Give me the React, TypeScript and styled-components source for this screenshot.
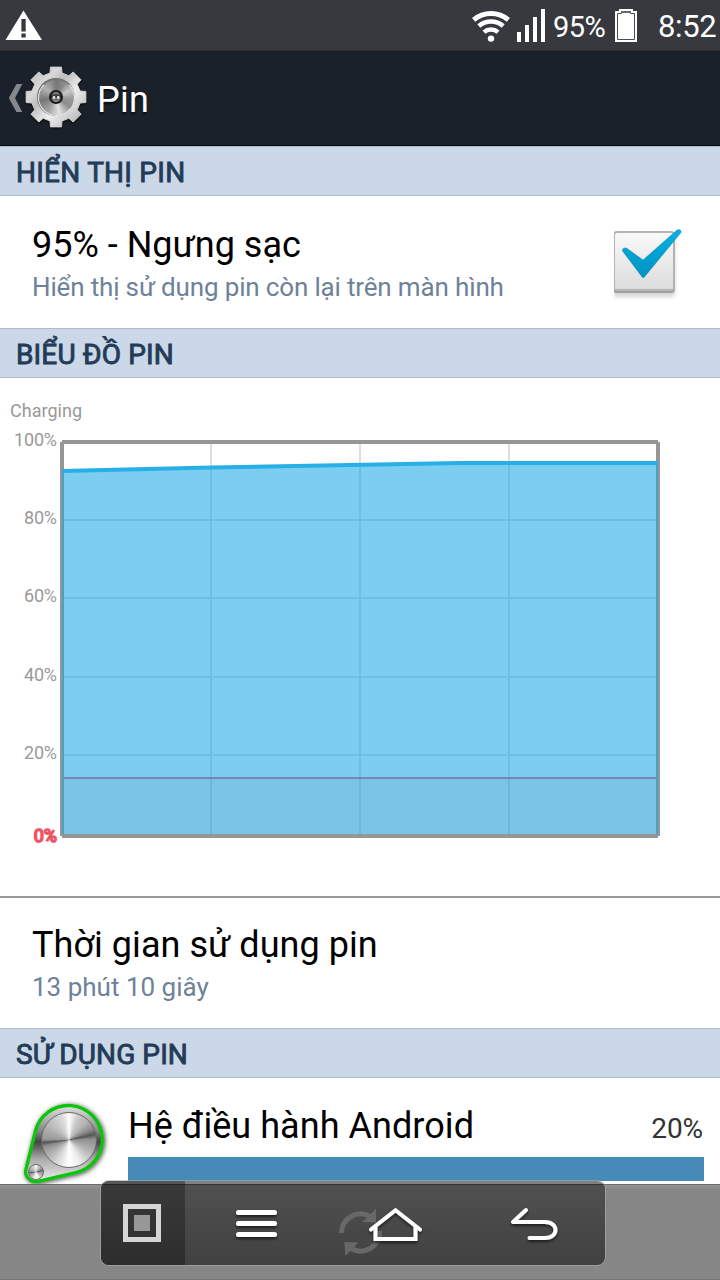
import React from "react";
import styled, { createGlobalStyle } from "styled-components";

const GlobalStyle = createGlobalStyle`
  * { box-sizing: border-box; }
  body { margin: 0; background: #fff; }
  svg { display: block; }
`;

const Screen = styled.div`
  width: 720px;
  height: 1280px;
  display: flex;
  flex-direction: column;
  overflow: hidden;
  background: #fff;
  font-family: Roboto, "Noto Sans", sans-serif;
  color: #000;
  white-space: nowrap;
`;

const StatusBar = styled.div`
  flex: none;
  height: 51px;
  display: flex;
  align-items: center;
  justify-content: space-between;
  background: #37393f;
  border-bottom: 1px solid #2b2e34;
  color: #fff;
`;

const StatusGroup = styled.div`
  display: flex;
  align-items: center;
  height: 50px;
`;

const StatusText = styled.span<{ $size: number; $width: number; $gap: number; $track: number }>`
  width: ${(p) => p.$width}px;
  margin-left: ${(p) => p.$gap}px;
  padding-top: 3px;
  font-size: ${(p) => p.$size}px;
  letter-spacing: ${(p) => p.$track}px;
  line-height: 50px;
`;

const ActionBar = styled.header`
  flex: none;
  height: 95px;
  display: flex;
  align-items: center;
  padding-left: 8px;
  background: #1b212a;
  border-bottom: 1px solid #05070a;
  color: #fff;
`;

const ActionTitle = styled.h1`
  margin: 4px 0 0 9px;
  font-size: 36px;
  font-weight: 400;
  line-height: 42px;
  letter-spacing: 0.3px;
  text-shadow: 0 2px 2px rgba(0, 0, 0, 0.6);
`;

const GearBox = styled.div`
  position: relative;
  width: 64px;
  height: 64px;
  margin: -2px 0 0 1px;
  filter: drop-shadow(0 1px 1px rgba(0, 0, 0, 0.8));
`;

const GearDisc = styled.div`
  position: absolute;
  left: 14px;
  top: 14px;
  width: 37px;
  height: 37px;
  border-radius: 50%;
  border: 1.5px solid #efefef;
  border-top-color: #777;
  background: conic-gradient(#777 0deg, #8b8b8b 30deg, #c8c8c8 62deg, #999 95deg, #8c8c8c 125deg, #e2e2e2 170deg, #a5a5a5 210deg, #777 260deg, #b2b2b2 310deg, #777 360deg);
`;

const GearHub = styled.div`
  position: absolute;
  left: 10px;
  top: 10px;
  width: 14px;
  height: 14px;
  border-radius: 50%;
  border: 2px solid #191919;
  background: radial-gradient(circle at 30% 55%, #ddd 0 12%, transparent 22%), radial-gradient(circle at 72% 55%, #ddd 0 12%, transparent 22%), linear-gradient(#999, #222 45%, #aaa);
`;

const Content = styled.main`
  flex: none;
  height: 1038px;
  overflow: hidden;
`;

const SectionHeader = styled.h2<{ $track: number }>`
  height: 50px;
  margin: 0;
  padding: 3px 0 0 16px;
  background: #cbd8e8;
  border-top: 1px solid #adbdcb;
  border-bottom: 1px solid #adbdcb;
  color: #243b57;
  font-size: 28px;
  font-weight: 400;
  -webkit-text-stroke: 0.9px #243b57;
  line-height: 46px;
  letter-spacing: ${(p) => p.$track}px;
`;

const Row = styled.div<{ $height: number; $pad: number }>`
  height: ${(p) => p.$height}px;
  display: flex;
  align-items: flex-start;
  justify-content: space-between;
  padding: ${(p) => p.$pad}px 32px 0 32px;
`;

const RowTitle = styled.div<{ $track?: number }>`
  font-size: 36px;
  line-height: 42px;
  letter-spacing: ${(p) => p.$track ?? 0}px;
`;

const RowSummary = styled.div<{ $track?: number }>`
  margin-top: 5px;
  color: #6d8299;
  font-size: 26px;
  line-height: 32px;
  letter-spacing: ${(p) => p.$track ?? 0}px;
`;

const CheckSlot = styled.div`
  margin-right: -4px;
`;

const ChartPanel = styled.div`
  height: 520px;
  border-bottom: 2px solid #999;
`;

const AppRow = styled.div`
  display: flex;
  padding: 22px 16px 0 20px;
`;

const AppIconBox = styled.div`
  position: relative;
  width: 90px;
  height: 90px;
`;

const Knob = styled.div<{ $x: number; $y: number; $size: number }>`
  position: absolute;
  left: ${(p) => p.$x}px;
  top: ${(p) => p.$y}px;
  width: ${(p) => p.$size}px;
  height: ${(p) => p.$size}px;
  border-radius: 50%;
  border: 1.5px solid #6b6b6b;
  background: conic-gradient(#fff 0deg, #ccc 20deg, #b2b2b2 45deg, #8a8a8a 65deg, #555 78deg, #909090 88deg, #b5b5b5 120deg, #eee 155deg, #fff 180deg, #ddd 205deg, #a8a8a8 240deg, #8d8d8d 256deg, #555 264deg, #999 272deg, #bbb 310deg, #ddd 345deg, #fff 360deg);
`;

const AppInfo = styled.div`
  flex: 1;
  margin-left: 18px;
`;

const AppLine = styled.div`
  display: flex;
  justify-content: space-between;
  align-items: baseline;
  height: 57px;
  padding-top: 5px;
`;

const Percent = styled.span`
  margin-right: 1px;
  color: #333;
  font-size: 28px;
  letter-spacing: -0.1px;
`;

const UsageBar = styled.div`
  height: 24px;
  background: #468ab8;
`;

const NavBar = styled.nav`
  flex: none;
  height: 96px;
  display: flex;
  align-items: flex-start;
  padding-left: 101px;
  background: linear-gradient(#929292, #868686 5px);
  border-top: 1px solid #6c6c6c;
  border-bottom: 1px solid #757575;
`;

const NavPanel = styled.div`
  width: 504px;
  height: 84px;
  margin-top: -4px;
  display: flex;
  border-radius: 8px;
  overflow: hidden;
  background: linear-gradient(#808080 0 3px, #343434 3px 4px, #505050 4px, #414141 100%);
  box-shadow: 0 0 0 1px rgba(170, 170, 170, 0.65);
`;

const NavButton = styled.div<{ $width: number; $active?: boolean }>`
  width: ${(p) => p.$width}px;
  height: 84px;
  background: ${(p) => (p.$active ? "linear-gradient(#575757 0 3px, #252525 3px 4px, #393939 4px, #2d2d2d 100%)" : "transparent")};
`;

const gearPath = (() => {
  const pts: string[] = [];
  const steps: [number, number][] = [[-14, 24.8], [-10.5, 30.4], [10.5, 30.4], [14, 24.8]];
  for (let i = 0; i < 8; i++) {
    for (const [a, r] of steps) {
      const t = ((i * 45 + a) * Math.PI) / 180;
      pts.push(`${(32 + r * Math.sin(t)).toFixed(2)},${(32 - r * Math.cos(t)).toFixed(2)}`);
    }
  }
  return `M${pts.join("L")}Z`;
})();

const arc = (r: number) => {
  const t = (40 * Math.PI) / 180;
  const dx = r * Math.sin(t);
  const y = 40.5 - r * Math.cos(t);
  return `M${20 - dx} ${y}A${r} ${r} 0 0 1 ${20 + dx} ${y}`;
};

const WarningIcon = () => (
  <svg width="50" height="50">
    <path d="M23.5 10.5 42 40H5.5Z" fill="#fff" />
    <path d="M21.4 19h4.3v12.500h-4.3zM21.4 33.500h4.3v4h-4.3z" fill="#37393f" />
  </svg>
);

const SignalIcons = () => (
  <svg width="80" height="50">
    <g fill="none" stroke="#fff">
      <path d={arc(27)} strokeWidth="5" />
      <path d={arc(19)} strokeWidth="4.6" />
      <path d={arc(11)} strokeWidth="4.4" />
    </g>
    <circle cx="20" cy="38.6" r="3.2" fill="#fff" />
    <path d="M46 32h4v10h-4zM54 25h4v17h-4zM62 17h4v25h-4zM70 9h4v33h-4z" fill="#fff" />
  </svg>
);

const BatteryIcon = () => (
  <svg width="24" height="50">
    <path d="M5 9h14v2h4v31H1V11h4z" fill="#fff" />
    <path d="M3.500 39.500V13.500H7.500V11.500H16.500V13.500H20.500V39.500Z" fill="none" stroke="#4a4c51" />
    <path d="M7 11h10v2H7z" fill="#66686c" />
  </svg>
);

const Chevron = () => (
  <svg width="15" height="30">
    <path d="M8.500 1h5.800L7 15l7.200 14H8.400L.8 15z" fill="#84878b" />
  </svg>
);

const SettingsGear = () => (
  <GearBox>
    <svg width="64" height="64">
      <defs>
        <linearGradient id="gear" x1="0" y1="0" x2="1" y2="1">
          <stop offset="0" stopColor="#b5b5b5" />
          <stop offset=".28" stopColor="#d9d9d9" />
          <stop offset=".4" stopColor="#bdbdbd" />
          <stop offset=".6" stopColor="#eee" />
          <stop offset="1" stopColor="#a5a5a5" />
        </linearGradient>
      </defs>
      <path d={gearPath} fill="url(#gear)" stroke="#cfcfcf" strokeWidth="1" strokeLinejoin="round" />
      <circle cx="32" cy="32" r="19" fill="#707070" />
    </svg>
    <GearDisc>
      <GearHub />
    </GearDisc>
  </GearBox>
);

const Checkbox = () => (
  <svg width="78" height="78">
    <defs>
      <linearGradient id="box" x1="0" y1="0" x2="0" y2="1">
        <stop offset="0" stopColor="#fafafa" />
        <stop offset="1" stopColor="#dadada" />
      </linearGradient>
      <linearGradient id="tick" x1="0" y1="0" x2="0" y2="1">
        <stop offset="0" stopColor="#06b2e0" />
        <stop offset="1" stopColor="#0092c3" />
      </linearGradient>
      <filter id="soft" x="-20%" y="-20%" width="140%" height="150%">
        <feDropShadow dx="0" dy="4" stdDeviation="2" floodOpacity=".16" />
      </filter>
    </defs>
    <g transform="translate(-4 0)">
      <rect x="4" y="8" width="60" height="60" rx="3" fill="url(#box)" stroke="#b3b3b3" strokeWidth="2" filter="url(#soft)" />
      <path d="M4 65.500Q4 68 7 68H61Q64 68 64 65.500" fill="none" stroke="#a0a0a0" strokeWidth="2" />
      <path d="M5 66H63" stroke="#b5b5b5" strokeWidth="2" />
      <path d="M12.500 27Q12 23.500 16.500 24L33 36L67 6Q71.500 4.500 71 8.500L34 53.500H32.500Z" fill="url(#tick)" stroke="#007fa8" strokeWidth=".4" />
    </g>
  </svg>
);

const axisLabels = [
  { text: "100%", y: 68, width: 43 },
  { text: "80%", y: 146, width: 33 },
  { text: "60%", y: 224, width: 33 },
  { text: "40%", y: 303, width: 33 },
  { text: "20%", y: 381, width: 33 },
];

const BatteryChart = () => (
  <svg width="720" height="518" fontFamily="Roboto, sans-serif" fontSize="18">
    <text x="10" y="39" fill="#999" textLength="72">Charging</text>
    {axisLabels.map((l) => (
      <text key={l.text} x="57" y={l.y} fill="#999" textAnchor="end" textLength={l.width}>{l.text}</text>
    ))}
    <text x="57" y="464" fill="#f05565" stroke="#f05565" strokeWidth="1.7" textAnchor="end">0%</text>
    <path d="M211 66V456M360 66V456M509 66V456M64 142H656M64 220H656M64 299H656M64 377H656" stroke="#dedede" strokeWidth="2" />
    <path d="M62 64V458M658 64V458M62 64H658" stroke="#969696" strokeWidth="4" />
    <path d="M62 93L211 89.500L460 85H658V456H62Z" fill="#16a8e4" fillOpacity=".56" />
    <path d="M64 401H656V456H64Z" fill="#7870a0" fillOpacity=".11" />
    <path d="M64 400H656" stroke="#7585b5" strokeWidth="2" />
    <path d="M62 93L211 89.500L460 85H658" fill="none" stroke="#28afe5" strokeWidth="4" />
    <path d="M62 458H658" stroke="#969696" strokeWidth="4" />
  </svg>
);

const AndroidIcon = () => (
  <AppIconBox>
    <svg width="90" height="90" overflow="visible">
      <defs>
        <filter id="dark" x="-20%" y="-20%" width="140%" height="140%">
          <feDropShadow dx="1" dy="1" stdDeviation="2.5" floodOpacity=".75" />
        </filter>
        <linearGradient id="body" x1="0" y1="0" x2="0" y2="1">
          <stop offset="0" stopColor="#e2e2e2" />
          <stop offset=".33" stopColor="#888" />
          <stop offset=".48" stopColor="#444" />
          <stop offset=".7" stopColor="#aaa" />
          <stop offset="1" stopColor="#eee" />
        </linearGradient>
      </defs>
      <path d="M15.300 31.400A34 34 0 1 1 55.800 72.700L17.900 81.300A10 10 0 0 1 6 69.100Z" fill="url(#body)" stroke="#0cc40c" strokeWidth="3.4" filter="url(#dark)" />
    </svg>
    <Knob $x={20.5} $y={12} $size={56} />
    <Knob $x={8} $y={64} $size={16} />
  </AppIconBox>
);

const NavIcons = {
  square: (
    <svg width="84" height="84">
      <rect x="24.500" y="25.500" width="33" height="33" fill="none" stroke="#d5d5d5" strokeWidth="5" />
      <rect x="33" y="34" width="16" height="16" fill="#989898" />
    </svg>
  ),
  menu: (
    <svg width="142" height="84">
      <g fill="#fff" filter="url(#navShadow)">
        <rect x="51" y="29" width="41" height="5" rx="2.5" />
        <rect x="51" y="40" width="41" height="5" rx="2.5" />
        <rect x="51" y="51" width="41" height="5" rx="2.5" />
      </g>
    </svg>
  ),
  home: (
    <svg width="138" height="84">
      <defs>
        <filter id="navShadow" x="-20%" y="-20%" width="140%" height="160%">
          <feDropShadow dx="0" dy="2" stdDeviation="1.5" floodOpacity=".6" />
        </filter>
      </defs>
      <g fill="none" stroke="#686868" strokeWidth="5">
        <path d="M14.500 52A19 19 0 0 1 43 35.500" />
        <path d="M52.500 50A19 19 0 0 1 24 67.500" />
      </g>
      <path d="M49 27.700V41.500L35 41L40 36.500ZM17.300 61L31.500 61.500L18.500 75Z" fill="#686868" />
      <g fill="none" stroke="#fff" strokeWidth="4" filter="url(#navShadow)">
        <path d="M44 48.500L68.500 29.200L93 48.500" strokeLinecap="round" />
        <path d="M48.500 46V58H88.500V46" />
      </g>
    </svg>
  ),
  back: (
    <svg width="140" height="84">
      <path d="M61 29L48 41H80C94 41 94 57 80 57H64.500" fill="none" stroke="#fff" strokeWidth="4" strokeLinecap="round" strokeLinejoin="round" filter="url(#navShadow)" />
    </svg>
  ),
};

export default function App() {
  return (
    <Screen>
      <GlobalStyle />
      <StatusBar>
        <WarningIcon />
        <StatusGroup>
          <SignalIcons />
          <StatusText $size={29} $width={61} $gap={2} $track={-0.6}>95%</StatusText>
          <BatteryIcon />
          <StatusText $size={31} $width={62} $gap={20} $track={-0.4}>8:52</StatusText>
        </StatusGroup>
      </StatusBar>
      <ActionBar>
        <Chevron />
        <SettingsGear />
        <ActionTitle>Pin</ActionTitle>
      </ActionBar>
      <Content>
        <SectionHeader $track={0.25}>HIỂN THỊ PIN</SectionHeader>
        <Row $height={132} $pad={28}>
          <div>
            <RowTitle>95% - Ngưng sạc</RowTitle>
            <RowSummary $track={-0.16}>Hiển thị sử dụng pin còn lại trên màn hình</RowSummary>
          </div>
          <CheckSlot><Checkbox /></CheckSlot>
        </Row>
        <SectionHeader $track={0.15}>BIỂU ĐỒ PIN</SectionHeader>
        <ChartPanel>
          <BatteryChart />
        </ChartPanel>
        <Row $height={130} $pad={26}>
          <div>
            <RowTitle $track={0.05}>Thời gian sử dụng pin</RowTitle>
            <RowSummary>13 phút 10 giây</RowSummary>
          </div>
        </Row>
        <SectionHeader $track={0.1}>SỬ DỤNG PIN</SectionHeader>
        <AppRow>
          <AndroidIcon />
          <AppInfo>
            <AppLine>
              <RowTitle $track={0.05}>Hệ điều hành Android</RowTitle>
              <Percent>20%</Percent>
            </AppLine>
            <UsageBar />
          </AppInfo>
        </AppRow>
      </Content>
      <NavBar>
        <NavPanel>
          <NavButton $width={84} $active>{NavIcons.square}</NavButton>
          <NavButton $width={142}>{NavIcons.menu}</NavButton>
          <NavButton $width={138}>{NavIcons.home}</NavButton>
          <NavButton $width={140}>{NavIcons.back}</NavButton>
        </NavPanel>
      </NavBar>
    </Screen>
  );
}
